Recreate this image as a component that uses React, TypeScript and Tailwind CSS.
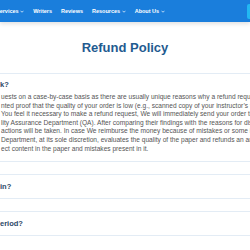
import React from 'react';

const font = { fontFamily: '"Liberation Sans", Arial, sans-serif' };

const Chevron = () => (
  <svg width="4" height="3" viewBox="0 0 8 5" className="ml-[1.5px] mt-[1px]">
    <path d="M1 1l3 3 3-3" fill="none" stroke="white" strokeWidth="1.4" />
  </svg>
);

const NavItem = ({ label, drop = false }: { label: string; drop?: boolean }) => (
  <div className="flex items-center text-[5.5px] font-bold text-white whitespace-nowrap">
    {label}
    {drop && <Chevron />}
  </div>
);

const lines = [
  'uests on a case-by-case basis as there are usually unique reasons why a refund request is made.',
  'nted proof that the quality of your order is low (e.g., scanned copy of your instructor\u2019s feedback',
  'You feel it necessary to make a refund request, We will immediately send your order to our',
  'lity Assurance Department (QA). After comparing their findings with the reasons for dissatisfaction,',
  'actions will be taken. In case We reimburse the money because of mistakes or some irrelevant',
  'Department, at its sole discretion, evaluates the quality of the paper and refunds an amount',
  'ect content in the paper and mistakes present in it.',
];

const Question = ({ title, children }: { title: string; children?: React.ReactNode }) => (
  <div className="-ml-[20px] w-[300px] border border-[#e3ecf5] bg-white">
    <div className={`pl-[19px] ${children ? 'pt-[6px]' : 'py-[7px]'} text-[7.5px] font-bold leading-[9px] text-[#2a4766] whitespace-nowrap`}>
      {title}
    </div>
    {children}
  </div>
);

export default function App() {
  return (
    <div className="relative w-[250px] h-[250px] overflow-hidden bg-white" style={font}>
      <div className="relative z-10 flex h-[22px] items-center bg-[#1a7edc] shadow-[0_2px_4px_rgba(0,0,0,0.12)]">
        <div className="-ml-[4px] flex items-center gap-[9px]">
          <NavItem label="Services" drop />
          <NavItem label="Writers" />
          <NavItem label="Reviews" />
          <NavItem label="Resources" drop />
          <NavItem label="About Us" drop />
        </div>
        <div className="absolute left-[247px] top-[4px] h-[15px] w-[20px] rounded-[2px] bg-[#22b8f2]" />
      </div>

      <h1 className="mt-[18px] text-center text-[13px] font-bold leading-[15px] text-[#1f5b90]">Refund Policy</h1>

      <div className="mt-[18px] flex flex-col gap-[12px]">
        <Question title="k?">
          <div className="pl-[20px] pt-[4px] pb-[8px] text-[6.6px] leading-[8.6px] text-[#555555]">
            {lines.map((l) => (
              <div key={l} className="whitespace-nowrap">{l}</div>
            ))}
          </div>
        </Question>
        <Question title="in?" />
        <Question title="eriod?" />
      </div>
    </div>
  );
}
